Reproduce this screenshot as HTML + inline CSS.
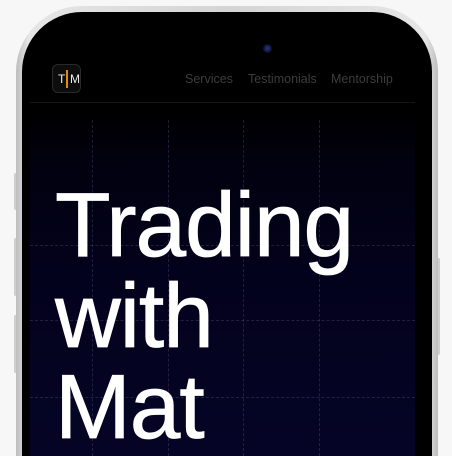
<!DOCTYPE html>
<html><head><style>
html,body{margin:0;padding:0;width:452px;height:456px;overflow:hidden;}
body{background:#f7f7f7;position:relative;font-family:"Liberation Sans",sans-serif;}
.frame{position:absolute;left:16px;top:6px;width:422px;height:450px;border-radius:66px 66px 0 0;background:linear-gradient(90deg,#bdbdbd,#e6e6e6 3%,#d4d4d4 50%,#e6e6e6 97%,#bdbdbd);}
.bezel{position:absolute;left:22px;top:12px;width:410px;height:444px;border-radius:60px 60px 0 0;background:#000;}
.screen{position:absolute;left:30px;top:20px;width:385px;height:436px;border-radius:52px 52px 0 0;background:linear-gradient(180deg,#000 0,#000 90px,#02010f 140px,#03021c 250px,#050426 436px);overflow:hidden;}
.btn{position:absolute;background:#cfcfcf;border-radius:2px;}
.v{position:absolute;top:0;bottom:0;border-left:1px dashed rgba(120,120,170,.25);}
.h{position:absolute;left:0;right:0;border-top:1px dashed rgba(120,120,170,.25);}
.nav{position:absolute;top:72px;font-size:12.5px;color:#3d3d3d;}
.logo{position:absolute;left:52px;top:64px;width:29px;height:29px;border-radius:6px;background:#0d0d0d;border:1px solid #2a2a2a;box-sizing:border-box;color:#eee;font-size:12px;}
h1{position:absolute;left:55px;top:180px;margin:0;font-size:91px;line-height:91px;font-weight:normal;color:#fff;letter-spacing:-1px;-webkit-text-stroke:0.8px #fff;}
</style></head><body>
<div class="btn" style="left:14px;top:173px;width:3px;height:37px"></div>
<div class="btn" style="left:14px;top:238px;width:3px;height:58px"></div>
<div class="btn" style="left:14px;top:315px;width:3px;height:58px"></div>
<div class="btn" style="left:437px;top:258px;width:3px;height:97px"></div>
<div class="frame"></div>
<div class="bezel"></div>
<div class="screen">
  <div class="v" style="left:62px;top:100px"></div>
  <div class="v" style="left:138px;top:100px"></div>
  <div class="v" style="left:213px;top:100px"></div>
  <div class="v" style="left:289px;top:100px"></div>
  <div class="h" style="top:225px"></div>
  <div class="h" style="top:300px"></div>
  <div class="h" style="top:377px"></div>
  <div style="position:absolute;left:0;right:0;top:82px;border-top:1px solid #151515"></div>
</div>
<div style="position:absolute;left:263px;top:44px;width:9px;height:9px;border-radius:50%;background:radial-gradient(#2a3a8a,#0a0c25 70%)"></div>
<div class="logo"><span style="position:absolute;left:5px;top:7px">T</span><span style="position:absolute;left:13px;top:5px;width:2px;height:18px;background:#e08a10"></span><span style="position:absolute;left:17px;top:7px">M</span></div>
<div class="nav" style="left:185px">Services</div>
<div class="nav" style="left:248px">Testimonials</div>
<div class="nav" style="left:331px">Mentorship</div>
<h1>Trading<br>with<br>Mat</h1>
</body></html>
